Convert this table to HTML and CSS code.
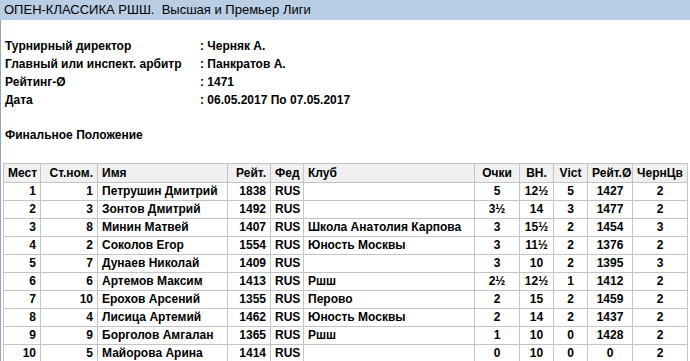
FILE: index.html
```html
<!DOCTYPE html>
<html lang="ru">
<head>
<meta charset="utf-8">
<title>ОПЕН-КЛАССИКА РШШ</title>
<link rel="stylesheet" href="styles.css">
</head>
<body>
<div class="page">
  <div class="titlebar">ОПЕН-КЛАССИКА РШШ.&nbsp; Высшая и Премьер Лиги</div>
  <div class="content">
    <div class="info">
      <div class="label">Турнирный директор</div><div class="value">: Черняк А.</div>
      <div class="label">Главный или инспект. арбитр</div><div class="value">: Панкратов А.</div>
      <div class="label">Рейтинг-Ø</div><div class="value">: 1471</div>
      <div class="label">Дата</div><div class="value">: 06.05.2017 По 07.05.2017</div>
    </div>
    <div class="section">Финальное Положение</div>
    <table class="standings">
      <colgroup>
        <col class="c-place"><col class="c-start"><col class="c-name"><col class="c-rating"><col class="c-fed"><col class="c-club">
        <col class="c-pts"><col class="c-bh"><col class="c-vict"><col class="c-avg"><col class="c-black">
      </colgroup>
      <thead>
        <tr>
          <th class="r">Мест</th><th class="r">Ст.ном.</th><th class="l">Имя</th><th class="r">Рейт.</th><th class="l">Фед</th><th class="l">Клуб</th>
          <th class="c">Очки</th><th class="c">ВН.</th><th class="c">Vict</th><th class="c">Рейт.Ø</th><th class="c">ЧернЦв</th>
        </tr>
      </thead>
      <tbody>
        <tr><td class="r">1</td><td class="r">1</td><td class="l">Петрушин Дмитрий</td><td class="r">1838</td><td class="l">RUS</td><td class="l"></td><td class="c">5</td><td class="c">12½</td><td class="c">5</td><td class="c">1427</td><td class="c">2</td></tr>
        <tr><td class="r">2</td><td class="r">3</td><td class="l">Зонтов Дмитрий</td><td class="r">1492</td><td class="l">RUS</td><td class="l"></td><td class="c">3½</td><td class="c">14</td><td class="c">3</td><td class="c">1477</td><td class="c">2</td></tr>
        <tr><td class="r">3</td><td class="r">8</td><td class="l">Минин Матвей</td><td class="r">1407</td><td class="l">RUS</td><td class="l">Школа Анатолия Карпова</td><td class="c">3</td><td class="c">15½</td><td class="c">2</td><td class="c">1454</td><td class="c">3</td></tr>
        <tr><td class="r">4</td><td class="r">2</td><td class="l">Соколов Егор</td><td class="r">1554</td><td class="l">RUS</td><td class="l">Юность Москвы</td><td class="c">3</td><td class="c">11½</td><td class="c">2</td><td class="c">1376</td><td class="c">2</td></tr>
        <tr><td class="r">5</td><td class="r">7</td><td class="l">Дунаев Николай</td><td class="r">1409</td><td class="l">RUS</td><td class="l"></td><td class="c">3</td><td class="c">10</td><td class="c">2</td><td class="c">1395</td><td class="c">3</td></tr>
        <tr><td class="r">6</td><td class="r">6</td><td class="l">Артемов Максим</td><td class="r">1413</td><td class="l">RUS</td><td class="l">Ршш</td><td class="c">2½</td><td class="c">12½</td><td class="c">1</td><td class="c">1412</td><td class="c">2</td></tr>
        <tr><td class="r">7</td><td class="r">10</td><td class="l">Ерохов Арсений</td><td class="r">1355</td><td class="l">RUS</td><td class="l">Перово</td><td class="c">2</td><td class="c">15</td><td class="c">2</td><td class="c">1459</td><td class="c">2</td></tr>
        <tr><td class="r">8</td><td class="r">4</td><td class="l">Лисица Артемий</td><td class="r">1462</td><td class="l">RUS</td><td class="l">Юность Москвы</td><td class="c">2</td><td class="c">14</td><td class="c">2</td><td class="c">1437</td><td class="c">2</td></tr>
        <tr><td class="r">9</td><td class="r">9</td><td class="l">Борголов Амгалан</td><td class="r">1365</td><td class="l">RUS</td><td class="l">Ршш</td><td class="c">1</td><td class="c">10</td><td class="c">0</td><td class="c">1428</td><td class="c">2</td></tr>
        <tr><td class="r">10</td><td class="r">5</td><td class="l">Майорова Арина</td><td class="r">1414</td><td class="l">RUS</td><td class="l"></td><td class="c">0</td><td class="c">10</td><td class="c">0</td><td class="c">0</td><td class="c">2</td></tr>
      </tbody>
    </table>
  </div>
</div>
</body>
</html>
```
FILE: styles.css
```css
html, body {
  margin: 0;
  padding: 0;
  background: #ffffff;
}
body {
  font-family: "Liberation Sans", Arial, sans-serif;
  font-size: 12px;
  color: #000000;
}
.page {
  border-left: 1px solid #8fa8c8;
  min-height: 361px;
  box-sizing: border-box;
}
.titlebar {
  background: #b9cde5;
  height: 20px;
  line-height: 20px;
  padding-left: 3px;
  font-size: 13px;
  white-space: nowrap;
  margin-left: -1px;
  padding-left: 4px;
}
.content {
  padding-left: 2px;
  padding-top: 17px;
}
.info {
  display: grid;
  grid-template-columns: 195px auto;
  padding-left: 2px;
  font-weight: bold;
  line-height: 18px;
}
.section {
  font-weight: bold;
  line-height: 18px;
  padding-left: 2px;
  margin-top: 17px;
}
.standings {
  margin-top: 19px;
  border-collapse: collapse;
  table-layout: fixed;
  width: 685px;
  font-weight: bold;
}
.standings th,
.standings td {
  border: 1px solid #c4c4c4;
  padding: 0 4px;
  height: 17px;
  line-height: 17px;
  white-space: nowrap;
  overflow: hidden;
}
.standings th {
  background: #f0f0f0;
  height: 18px;
  line-height: 18px;
}
.r { text-align: right; }
.l { text-align: left; }
.c { text-align: center; }
.c-place { width: 37px; }
.c-start { width: 57px; }
.c-name { width: 130px; }
.c-rating { width: 43px; }
.c-fed { width: 33px; }
.c-club { width: 171px; }
.c-pts { width: 45px; }
.c-bh { width: 34px; }
.c-vict { width: 34px; }
.c-avg { width: 45px; }
.c-black { width: 55px; }
```
